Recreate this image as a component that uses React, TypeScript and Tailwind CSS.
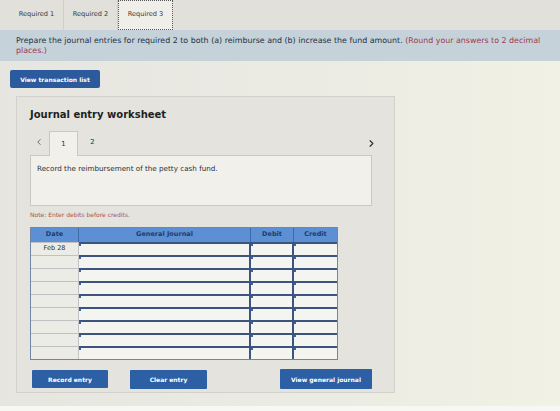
import { useState } from 'react';
import { ChevronLeft, ChevronRight } from 'lucide-react';

const tabs = ['Required 1', 'Required 2', 'Required 3'];
const rows = Array.from({ length: 9 }, (_, i) => (i === 0 ? 'Feb 28' : ''));

// little marker in the corner of each editable cell
const Tick = () => <span className="absolute left-0 top-0 w-[2px] h-[2px] bg-[#3a63a8]" />;

const App = () => {
  const [activeTab, setActiveTab] = useState(2);
  const [step, setStep] = useState(1);

  return (
    <div className="w-[560px] h-[411px] overflow-hidden bg-linear-to-r from-[#e6e5df] via-[#ebeae3] to-[#f2f1e5] font-['DejaVu_Sans',sans-serif] text-[#2b2f36] flex flex-col">
      {/* requirement tabs */}
      <div className="h-[30px] bg-[#e1e0da] flex pl-[10px] shrink-0">
        {tabs.map((t, i) => (
          <button
            key={t}
            onClick={() => setActiveTab(i)}
            className={
              i === activeTab
                ? 'w-[55px] h-[30px] bg-[#efeee9] border border-dotted border-[#555] text-[6.6px] text-[#3a3a3a] flex items-center justify-center'
                : 'w-[54px] h-[30px] border-r border-[#cfcec8] text-[6.6px] text-[#3a3a3a] flex items-center justify-center'
            }
          >
            {t}
          </button>
        ))}
      </div>

      {/* instructions */}
      <div className="h-[31px] bg-[#c6d2d9] pl-[16px] pr-[18px] pt-[6px] text-[7.9px] leading-[10px] text-[#233143] shrink-0">
        Prepare the journal entries for required 2 to both (a) reimburse and (b) increase the fund amount.{' '}
        <span className="text-[#9b3b4e]">(Round your answers to 2 decimal places.)</span>
      </div>

      <div className="pl-[10px] pt-[9px] shrink-0">
        <button className="w-[90px] h-[18px] bg-[#2b5b9c] rounded-[2px] text-white text-[6px] font-bold flex items-center justify-center">
          View transaction list
        </button>
      </div>

      {/* worksheet panel */}
      <div className="ml-[16px] mt-[8px] w-[379px] h-[297px] bg-[#e4e3de] border border-[#d2d1cb] pl-[13px] pt-[11px] shrink-0 flex flex-col">
        <h2 className="text-[10px] font-bold text-[#1e1f22] leading-[14px]">Journal entry worksheet</h2>

        <div className="mt-[8px] h-[25px] w-[342px] flex items-end relative">
          <button onClick={() => setStep(1)} className="w-[18px] h-[20px] text-[#555] flex items-center justify-center mb-[3px]">
            <ChevronLeft size={10} strokeWidth={2} />
          </button>
          <div
            onClick={() => setStep(1)}
            className={
              step === 1
                ? 'ml-[1px] w-[29px] h-[25px] bg-[#f1f0eb] border border-b-0 border-[#c9c8c2] text-[6.8px] flex items-center justify-center relative top-[1px] z-10'
                : 'ml-[1px] w-[29px] h-[25px] text-[6.8px] flex items-center justify-center'
            }
          >
            1
          </div>
          <div
            onClick={() => setStep(2)}
            className={
              step === 2
                ? 'w-[29px] h-[25px] bg-[#f1f0eb] border border-b-0 border-[#c9c8c2] text-[6.8px] flex items-center justify-center relative top-[1px] z-10'
                : 'w-[29px] h-[25px] text-[6.8px] flex items-center justify-center'
            }
          >
            2
          </div>
          <button onClick={() => setStep(2)} className="absolute right-[-8px] top-[3px] w-[18px] h-[20px] text-[#333] flex items-center justify-center">
            <ChevronRight size={11} strokeWidth={2.6} />
          </button>
        </div>

        <div className="w-[342px] h-[51px] bg-[#f1f0eb] border border-[#c9c8c2] px-[6px] pt-[8px] text-[7.2px] text-[#2b2f36]">
          {step === 1 ? 'Record the reimbursement of the petty cash fund.' : 'Record the increase in the petty cash fund.'}
        </div>

        <p className="mt-[4px] text-[6px] text-[#a2555b]">Note: Enter debits before credits.</p>

        {/* journal table */}
        <div className="mt-[8px] w-[308px] border border-[#6f86a8]">
          <div className="grid grid-cols-[48px_172px_43px_1fr] h-[14px] bg-[#5c8fd3] text-[6.5px] font-bold text-[#1f3c6b]">
            <div className="flex items-center justify-center border-r border-[#3f6aa6]">Date</div>
            <div className="flex items-center justify-center border-r border-[#3f6aa6]">General Journal</div>
            <div className="flex items-center justify-center border-r border-[#3f6aa6]">Debit</div>
            <div className="flex items-center justify-center">Credit</div>
          </div>
          {rows.map((d, i) => (
            <div key={i} className="grid grid-cols-[48px_172px_43px_1fr] h-[13px]">
              <div className="bg-[#ecece7] border-t border-r border-[#bfc1c3] text-[6.5px] flex items-center justify-center">{d}</div>
              <div className="relative bg-[#f4f4f0] border-t-2 border-r-2 border-[#3d557e]"><Tick /></div>
              <div className="relative bg-[#f4f4f0] border-t-2 border-r-2 border-[#3d557e]"><Tick /></div>
              <div className="relative bg-[#f4f4f0] border-t-2 border-[#3d557e]"><Tick /></div>
            </div>
          ))}
        </div>

        <div className="mt-[9px] flex items-center">
          <button className="ml-[2px] w-[76px] h-[18px] bg-[#2c5fa4] rounded-[1px] text-white text-[6px] font-bold">
            Record entry
          </button>
          <button className="ml-[22px] w-[77px] h-[19px] bg-[#2c5fa4] rounded-[1px] text-white text-[6px] font-bold">
            Clear entry
          </button>
          <button className="ml-[73px] w-[92px] h-[20px] bg-[#2c5fa4] rounded-[1px] text-white text-[6px] font-bold">
            View general journal
          </button>
        </div>
      </div>

      <div className="flex-1" />
      <div className="h-[5px] bg-[#f7f7f4] shrink-0" />
    </div>
  );
};

export default App;
